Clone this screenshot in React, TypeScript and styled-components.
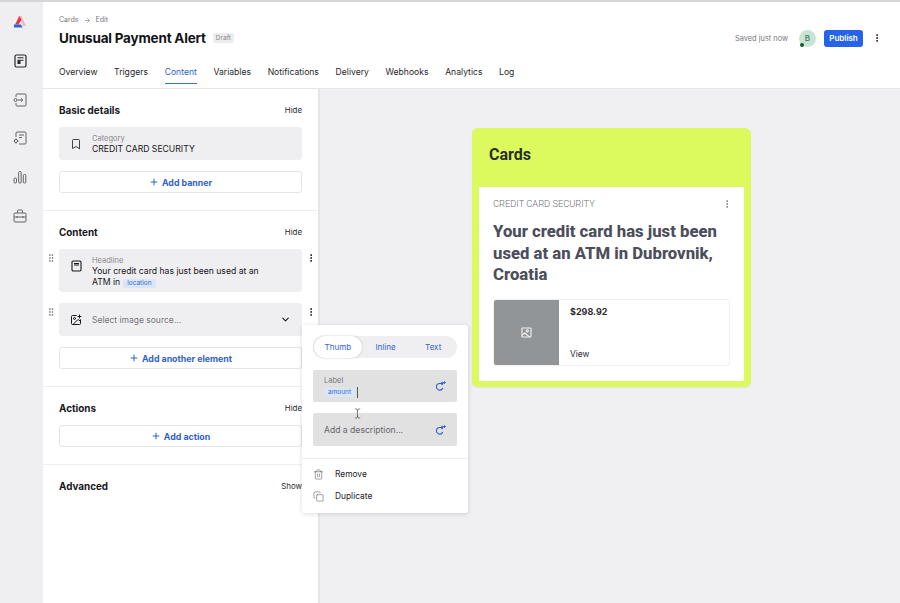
import React from "react";
import styled, { createGlobalStyle } from "styled-components";
import { Bookmark, ChevronDown, EllipsisVertical, GripVertical, ImagePlus, Plus, Trash2, Copy, ArrowRight, TextCursor } from "lucide-react";

const Global = createGlobalStyle`
  html, body { margin: 0; padding: 0; background: #f0eff1; }
  body { font-family: Inter, "Liberation Sans", sans-serif; color: #17171c; }
  #root { width: 900px; height: 603px; overflow: hidden; }
  * { box-sizing: border-box; }
`;

const Page = styled.div`
  position: relative;
  width: 900px;
  height: 603px;
  display: flex;
  border-top: 2px solid #d6d6d6;
  background: #f0eff1;
`;
const Rail = styled.nav`
  width: 43px;
  flex: none;
  background: #efeef0;
  display: flex;
  flex-direction: column;
  align-items: center;
  padding: 10px 3px 0 0;
  gap: 18.8px;
`;
const RailItem = styled.div`
  width: 20px;
  height: 20px;
  display: flex;
  align-items: center;
  justify-content: center;
`;
const Main = styled.div`
  flex: 1;
  min-width: 0;
  display: flex;
  flex-direction: column;
`;
const Header = styled.header`
  height: 87px;
  flex: none;
  background: #fff;
  border-bottom: 1px solid #e6e6e8;
  padding: 13px 16px 0;
  display: flex;
  flex-direction: column;
`;
const Crumbs = styled.div`
  display: flex;
  align-items: center;
  gap: 5px;
  font-size: 7px;
  line-height: 10px;
  color: #77777c;
`;
const TitleBar = styled.div`
  display: flex;
  align-items: center;
  height: 22px;
  margin-top: 2px;
`;
const Title = styled.h1`
  margin: 0;
  font-size: 13.5px;
  font-weight: 700;
  letter-spacing: -0.2px;
  color: #141418;
`;
const Draft = styled.span`
  margin-left: 7px;
  background: #ededee;
  color: #87878b;
  font-size: 6.5px;
  line-height: 10px;
  padding: 0 3px;
  border-radius: 2px;
`;
const HeaderRight = styled.div`
  margin-left: auto;
  margin-right: 2px;
  display: flex;
  align-items: center;
`;
const Saved = styled.span`
  font-size: 7.4px;
  color: #77777c;
  margin-right: 11px;
`;
const Avatar = styled.div`
  position: relative;
  width: 17px;
  height: 17px;
  border-radius: 50%;
  background: #c9e4d6;
  color: #3f7a5e;
  font-size: 8px;
  font-weight: 500;
  display: flex;
  align-items: center;
  justify-content: center;
  margin-right: 8px;
`;
const Presence = styled.span`
  position: absolute;
  left: 1px;
  bottom: 0;
  width: 4px;
  height: 4px;
  border-radius: 50%;
  background: #0e5a36;
`;
const Publish = styled.button`
  width: 39px;
  height: 17px;
  border: 0;
  border-radius: 3px;
  background: #2563eb;
  color: #fff;
  font: 600 8px Inter, sans-serif;
  padding: 0;
  margin-right: 9px;
`;
const Tabs = styled.div`
  display: flex;
  gap: 16.7px;
  margin-top: 13px;
`;
const Tab = styled.div<{ $active?: boolean }>`
  font-size: 8.6px;
  line-height: 14px;
  height: 22px;
  padding-top: 3px;
  color: ${(p) => (p.$active ? "#2f62c9" : "#26262b")};
  border-bottom: ${(p) => (p.$active ? "1.5px solid #3b6fdc" : "none")};
`;
const Body = styled.div`
  flex: 1;
  display: flex;
  min-height: 0;
`;
const Panel = styled.aside`
  width: 277px;
  flex: none;
  background: #fff;
  border-right: 2px solid #e6e6e8;
`;
const Section = styled.section<{ $last?: boolean }>`
  padding: 13px 16px 17px;
  border-bottom: ${(p) => (p.$last ? "none" : "1px solid #efeff0")};
`;
const SectionHead = styled.div`
  display: flex;
  justify-content: space-between;
  align-items: center;
  height: 16px;
  margin-bottom: 9px;
`;
const SectionTitle = styled.h2`
  margin: 0;
  font-size: 9.9px;
  font-weight: 700;
  color: #17171c;
`;
const Toggle = styled.span`
  font-size: 7.9px;
  color: #2a2a2e;
`;
const RowWrap = styled.div`
  position: relative;
  margin-bottom: 11px;
`;
const Field = styled.div<{ $h: number }>`
  height: ${(p) => p.$h}px;
  background: #efeef0;
  border-radius: 3px;
  display: flex;
  align-items: flex-start;
  padding: 7px 0 0 10px;
  gap: 9px;
`;
const FieldIcon = styled.div<{ $top?: number }>`
  width: 14px;
  flex: none;
  display: flex;
  justify-content: center;
  margin-top: ${(p) => p.$top ?? 0}px;
`;
const FieldText = styled.div`
  flex: 1;
  min-width: 0;
`;
const FieldLabel = styled.div`
  font-size: 7.5px;
  line-height: 9px;
  color: #8a8a8e;
`;
const FieldValue = styled.div`
  font-size: 8.65px;
  line-height: 11px;
  margin-top: 0.5px;
  color: #17171c;
`;
const Token = styled.span`
  display: inline-block;
  background: #d9e6f8;
  color: #3a6fd0;
  font-size: 6.5px;
  line-height: 9px;
  padding: 0 4px;
  border-radius: 3px;
  margin-left: 3px;
`;
const SelectRow = styled(Field)`
  align-items: center;
  padding: 0 11px 0 10px;
`;
const Placeholder = styled.span`
  flex: 1;
  font-size: 8.5px;
  color: #77777c;
`;
const AddButton = styled.button`
  width: 100%;
  height: 22px;
  background: #fff;
  border: 1px solid #e5e5e7;
  border-radius: 3px;
  color: #2f62c9;
  font: 700 8.8px Inter, sans-serif;
  display: flex;
  align-items: center;
  justify-content: center;
  gap: 3px;
  padding: 0;
`;
const Grip = styled.div`
  position: absolute;
  left: -13px;
  top: 3.5px;
  color: #66666a;
  display: flex;
`;
const Kebab = styled.div`
  position: absolute;
  right: -14px;
  top: 4px;
  color: #17171c;
  display: flex;
`;
const Canvas = styled.main`
  flex: 1;
  background: #f0eff1;
  padding: 39px 0 0 152px;
`;
const Card = styled.article`
  width: 279px;
  height: 259px;
  background: #dcf95d;
  border-radius: 6px;
  padding: 0 7px 6px;
  box-shadow: 0 1px 2px rgba(0, 0, 0, 0.06);
  display: flex;
  flex-direction: column;
`;
const CardTitle = styled.div`
  height: 59px;
  padding: 17px 10px 0;
  font-size: 16px;
  line-height: 19px;
  font-weight: 700;
  font-family: Roboto, sans-serif;
  color: #2b2e2a;
`;
const CardBody = styled.div`
  flex: 1;
  background: #fff;
  padding: 11px 14px 0;
`;
const CardTop = styled.div`
  display: flex;
  justify-content: space-between;
  align-items: center;
  height: 11px;
  margin-right: -2px;
  font-family: Roboto, sans-serif;
  font-size: 9.3px;
  font-weight: 300;
  color: #6f7074;
`;
const Headline = styled.div`
  margin-top: 12px;
  font-family: Roboto, sans-serif;
  font-size: 16.7px;
  line-height: 21.7px;
  font-weight: 800;
  color: #4c4e5c;
`;
const Media = styled.div`
  margin-top: 13px;
  width: 237px;
  height: 67px;
  border: 1px solid #f1f1f2;
  border-radius: 3px;
  display: flex;
  overflow: hidden;
`;
const MediaImage = styled.div`
  width: 66px;
  flex: none;
  background: #929598;
  display: flex;
  align-items: center;
  justify-content: center;
  margin: -1px 0 -1px -1px;
`;
const MediaText = styled.div`
  flex: 1;
  padding: 6px 10px 6px 11px;
  display: flex;
  flex-direction: column;
  justify-content: space-between;
`;
const Price = styled.div`
  font-size: 9px;
  font-weight: 700;
  color: #2b2b30;
`;
const ViewLink = styled.div`
  font-size: 8.4px;
  color: #2b2b30;
`;
const Popup = styled.div`
  position: absolute;
  left: 302px;
  top: 323px;
  width: 166px;
  height: 188px;
  background: #fff;
  border-radius: 3px;
  box-shadow: 0 1px 5px rgba(0, 0, 0, 0.14);
  padding: 11px 11px 0;
`;
const Segments = styled.div`
  display: flex;
  height: 22px;
  border-radius: 11px;
  background: #efeef0;
  padding-left: 1px;
`;
const Segment = styled.div<{ $active?: boolean }>`
  flex: 1;
  display: flex;
  align-items: center;
  justify-content: center;
  font-size: 8px;
  color: #3266c8;
  border-radius: 11px;
  background: ${(p) => (p.$active ? "#fff" : "transparent")};
  box-shadow: ${(p) => (p.$active ? "0 0 2px rgba(0,0,0,.25)" : "none")};
`;
const PopField = styled.div<{ $mt: number; $h: number }>`
  margin-top: ${(p) => p.$mt}px;
  height: ${(p) => p.$h}px;
  background: #e1e1e2;
  border-radius: 2px;
  display: flex;
  align-items: center;
  padding: 0 11px;
`;
const PopText = styled.div`
  flex: 1;
  padding-top: 2px;
`;
const PopLabel = styled.div`
  font-size: 7.5px;
  line-height: 10px;
  color: #77777c;
`;
const PopValue = styled.div`
  display: flex;
  align-items: center;
  height: 12px;
  margin-left: -3px;
`;
const Caret = styled.span`
  width: 1px;
  height: 11px;
  background: #55555a;
  margin-left: 2px;
`;
const PopPlaceholder = styled.span`
  display: block;
  font-size: 8.6px;
  line-height: 11px;
  color: #66666b;
`;
const PopDivider = styled.div`
  height: 1px;
  background: #eeeeef;
  margin: 12px -11px 0;
`;
const MenuItem = styled.div<{ $mt: number }>`
  display: flex;
  align-items: center;
  gap: 10px;
  height: 14px;
  margin-top: ${(p) => p.$mt}px;
  font-size: 8.4px;
  color: #222226;
`;
const MenuIcon = styled.span`
  width: 12px;
  display: flex;
  color: #55555a;
`;
const IBeam = styled.div`
  position: absolute;
  left: 352px;
  top: 406px;
  color: #444;
  display: flex;
`;

const Logo = () => (
  <svg width="14" height="14" viewBox="0 0 14 14">
    <path d="M6 1 L8.500 1 L13 11 L10 11 Z" fill="#f6b6c4" />
    <path d="M6.200 1 L8.500 4.800 L5.500 9.500 L2.200 9.500 Z" fill="#e8323c" />
    <path d="M1 9.500 L8 9.500 L9.600 12.500 L1 12.500 Z" fill="#2f62d8" />
  </svg>
);
const IconDoc = () => (
  <svg width="13" height="14" viewBox="0 0 13 14" fill="none" stroke="#26262b">
    <rect x="1" y="1" width="11" height="12" rx="1.500" strokeWidth="1.200" />
    <path d="M3.500 3.800h6M3.500 6.300h6" strokeWidth="1.100" />
    <rect x="3.500" y="6.500" width="3" height="3.500" fill="#26262b" strokeWidth="0" />
  </svg>
);
const IconEnter = () => (
  <svg width="14" height="14" viewBox="0 0 14 14" fill="none" stroke="#55555a" strokeWidth="0.9">
    <path d="M3 4V2a1 1 0 0 1 1-1h8a1 1 0 0 1 1 1v10a1 1 0 0 1-1 1H4a1 1 0 0 1-1-1v-2" />
    <circle cx="2.500" cy="7" r="1.500" />
    <path d="M4.500 7h5M8 5.300 9.800 7 8 8.700" />
  </svg>
);
const IconTemplate = () => (
  <svg width="14" height="14" viewBox="0 0 14 14" fill="none" stroke="#55555a" strokeWidth="0.9">
    <path d="M3 6V2a1 1 0 0 1 1-1h8a1 1 0 0 1 1 1v10a1 1 0 0 1-1 1H6" />
    <path d="M6 4h5M6 6.500h3" />
    <circle cx="3" cy="10" r="1.600" />
    <path d="M3 7.500v1M3 11.500v1M.6 10h.8M5 10h.7" />
  </svg>
);
const IconBars = () => (
  <svg width="14" height="14" viewBox="0 0 14 14" fill="none" stroke="#55555a" strokeWidth="0.9">
    <rect x="1" y="8" width="2.500" height="5" rx="1" />
    <rect x="5.700" y="1.500" width="2.500" height="11.500" rx="1" />
    <rect x="10.300" y="4.500" width="2.500" height="8.500" rx="1" />
  </svg>
);
const IconCase = () => (
  <svg width="14" height="14" viewBox="0 0 14 14" fill="none" stroke="#55555a" strokeWidth="0.9">
    <rect x="1" y="4" width="12" height="9" rx="1" />
    <path d="M4.500 4V2a1 1 0 0 1 1-1h3a1 1 0 0 1 1 1v2M1 8h12M4 7v2M10 7v2" />
  </svg>
);
const IconHeadline = () => (
  <svg width="11" height="12" viewBox="0 0 11 12" fill="none" stroke="#17171c" strokeWidth="1.100">
    <rect x="1" y="1" width="9" height="10" rx="1.200" />
    <path d="M3 3.500h5M3 5h5" />
  </svg>
);
const IconMediaImage = () => (
  <svg width="11" height="11" viewBox="0 0 11 11" fill="none" stroke="#f2f2f2" strokeWidth="1.100">
    <rect x="1" y="1" width="9" height="9" rx="0.600" />
    <circle cx="6.300" cy="3.800" r="1.100" />
    <path d="M1 8.300l2.800-2.300L8.500 10" />
  </svg>
);

const AddIcon = () => <Plus size={10} strokeWidth={2.4} />;
const RotateAdd = () => (
  <svg width="11" height="10" viewBox="0 0 11 10" fill="none" stroke="#2f62c9" strokeWidth="1.100">
    <path d="M7.800 7A3.300 3.300 0 1 1 5 2.500h3" />
    <path d="M6.500 1 8 2.500 6.500 4" />
    <path d="M9.500 0v3M8 1.500h3" strokeWidth="0.800" />
  </svg>
);

export default function App() {
  return (
    <Page>
      <Global />
      <Rail>
        <RailItem><Logo /></RailItem>
        <RailItem><IconDoc /></RailItem>
        <RailItem><IconEnter /></RailItem>
        <RailItem><IconTemplate /></RailItem>
        <RailItem><IconBars /></RailItem>
        <RailItem><IconCase /></RailItem>
      </Rail>
      <Main>
        <Header>
          <Crumbs>
            <span>Cards</span>
            <ArrowRight size={7} />
            <span>Edit</span>
          </Crumbs>
          <TitleBar>
            <Title>Unusual Payment Alert</Title>
            <Draft>Draft</Draft>
            <HeaderRight>
              <Saved>Saved just now</Saved>
              <Avatar>B<Presence /></Avatar>
              <Publish>Publish</Publish>
              <EllipsisVertical size={10} strokeWidth={2.4} />
            </HeaderRight>
          </TitleBar>
          <Tabs>
            <Tab>Overview</Tab>
            <Tab>Triggers</Tab>
            <Tab $active>Content</Tab>
            <Tab>Variables</Tab>
            <Tab>Notifications</Tab>
            <Tab>Delivery</Tab>
            <Tab>Webhooks</Tab>
            <Tab>Analytics</Tab>
            <Tab>Log</Tab>
          </Tabs>
        </Header>
        <Body>
          <Panel>
            <Section>
              <SectionHead>
                <SectionTitle>Basic details</SectionTitle>
                <Toggle>Hide</Toggle>
              </SectionHead>
              <RowWrap>
                <Field $h={33}>
                  <FieldIcon $top={4}><Bookmark size={12} strokeWidth={1.6} /></FieldIcon>
                  <FieldText>
                    <FieldLabel>Category</FieldLabel>
                    <FieldValue>CREDIT CARD SECURITY</FieldValue>
                  </FieldText>
                </Field>
              </RowWrap>
              <AddButton><AddIcon />Add banner</AddButton>
            </Section>
            <Section>
              <SectionHead>
                <SectionTitle>Content</SectionTitle>
                <Toggle>Hide</Toggle>
              </SectionHead>
              <RowWrap>
                <Grip><GripVertical size={10} strokeWidth={1.6} /></Grip>
                <Kebab><EllipsisVertical size={10} strokeWidth={2.4} /></Kebab>
                <Field $h={43}>
                  <FieldIcon $top={4}><IconHeadline /></FieldIcon>
                  <FieldText>
                    <FieldLabel>Headline</FieldLabel>
                    <FieldValue>Your credit card has just been used at an<br />ATM in<Token>location</Token></FieldValue>
                  </FieldText>
                </Field>
              </RowWrap>
              <RowWrap>
                <Grip><GripVertical size={10} strokeWidth={1.6} /></Grip>
                <Kebab><EllipsisVertical size={10} strokeWidth={2.4} /></Kebab>
                <SelectRow $h={33}>
                  <FieldIcon><ImagePlus size={12} strokeWidth={2} /></FieldIcon>
                  <Placeholder>Select image source...</Placeholder>
                  <ChevronDown size={11} strokeWidth={2.4} />
                </SelectRow>
              </RowWrap>
              <AddButton><AddIcon />Add another element</AddButton>
            </Section>
            <Section>
              <SectionHead>
                <SectionTitle>Actions</SectionTitle>
                <Toggle>Hide</Toggle>
              </SectionHead>
              <AddButton><AddIcon />Add action</AddButton>
            </Section>
            <Section $last>
              <SectionHead>
                <SectionTitle>Advanced</SectionTitle>
                <Toggle>Show</Toggle>
              </SectionHead>
            </Section>
          </Panel>
          <Canvas>
            <Card>
              <CardTitle>Cards</CardTitle>
              <CardBody>
                <CardTop>
                  <span>CREDIT CARD SECURITY</span>
                  <EllipsisVertical size={10} color="#77777c" />
                </CardTop>
                <Headline>Your credit card has just been used at an ATM in Dubrovnik, Croatia</Headline>
                <Media>
                  <MediaImage><IconMediaImage /></MediaImage>
                  <MediaText>
                    <Price>$298.92</Price>
                    <ViewLink>View</ViewLink>
                  </MediaText>
                </Media>
              </CardBody>
            </Card>
          </Canvas>
        </Body>
      </Main>
      <Popup>
        <Segments>
          <Segment $active>Thumb</Segment>
          <Segment>Inline</Segment>
          <Segment>Text</Segment>
        </Segments>
        <PopField $mt={12} $h={32}>
          <PopText>
            <PopLabel>Label</PopLabel>
            <PopValue><Token>amount</Token><Caret /></PopValue>
          </PopText>
          <RotateAdd />
        </PopField>
        <PopField $mt={11} $h={33}>
          <PopText><PopPlaceholder>Add a description...</PopPlaceholder></PopText>
          <RotateAdd />
        </PopField>
        <PopDivider />
        <MenuItem $mt={8}>
          <MenuIcon><Trash2 size={11} strokeWidth={1.2} /></MenuIcon>Remove
        </MenuItem>
        <MenuItem $mt={8}>
          <MenuIcon><Copy size={11} strokeWidth={1.2} /></MenuIcon>Duplicate
        </MenuItem>
      </Popup>
      <IBeam><TextCursor size={11} strokeWidth={1.4} /></IBeam>
    </Page>
  );
}
